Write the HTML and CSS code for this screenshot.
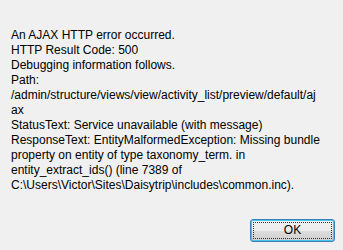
FILE: index.html
```html
<!DOCTYPE html>
<html lang="en">
<head>
  <meta charset="UTF-8">
  <title>Message</title>
  <link rel="stylesheet" href="styles.css">
</head>
<body>
  <div class="dialog">
    <div class="message">
      <div>An AJAX HTTP error occurred.</div>
      <div>HTTP Result Code: 500</div>
      <div>Debugging information follows.</div>
      <div>Path:</div>
      <div>/admin/structure/views/view/activity_list/preview/default/aj</div>
      <div>ax</div>
      <div>StatusText: Service unavailable (with message)</div>
      <div>ResponseText: EntityMalformedException: Missing bundle</div>
      <div>property on entity of type taxonomy_term. in</div>
      <div>entity_extract_ids() (line 7389 of</div>
      <div>C:\Users\Victor\Sites\Daisytrip\includes\common.inc).</div>
    </div>
    <div class="buttons">
      <button class="btn"><span class="focus">OK</span></button>
    </div>
  </div>
</body>
</html>
```

FILE: styles.css
```css
html, body {
  margin: 0;
  padding: 0;
  background: #f0f0f0;
}
.dialog {
  width: 343px;
  height: 250px;
  font-family: "Liberation Sans", Arial, sans-serif;
  font-size: 12px;
  color: #000;
}
.message {
  padding: 28px 0 0 11px;
  line-height: 15px;
  white-space: nowrap;
}
.buttons {
  display: flex;
  justify-content: flex-end;
  padding: 26px 8px 0 0;
}
.btn {
  width: 85px;
  height: 23px;
  padding: 2px;
  border: 1px solid #3c7fb1;
  border-radius: 3px;
  background: linear-gradient(#f2f2f2 0%, #ebebeb 50%, #dddddd 51%, #cfcfcf 100%);
  box-shadow: inset 0 0 0 1px #48c6f0;
  font-family: inherit;
  font-size: 12px;
  color: #000;
}
.focus {
  display: block;
  height: 100%;
  box-sizing: border-box;
  border: 1px dotted #333;
  line-height: 15px;
}
```
